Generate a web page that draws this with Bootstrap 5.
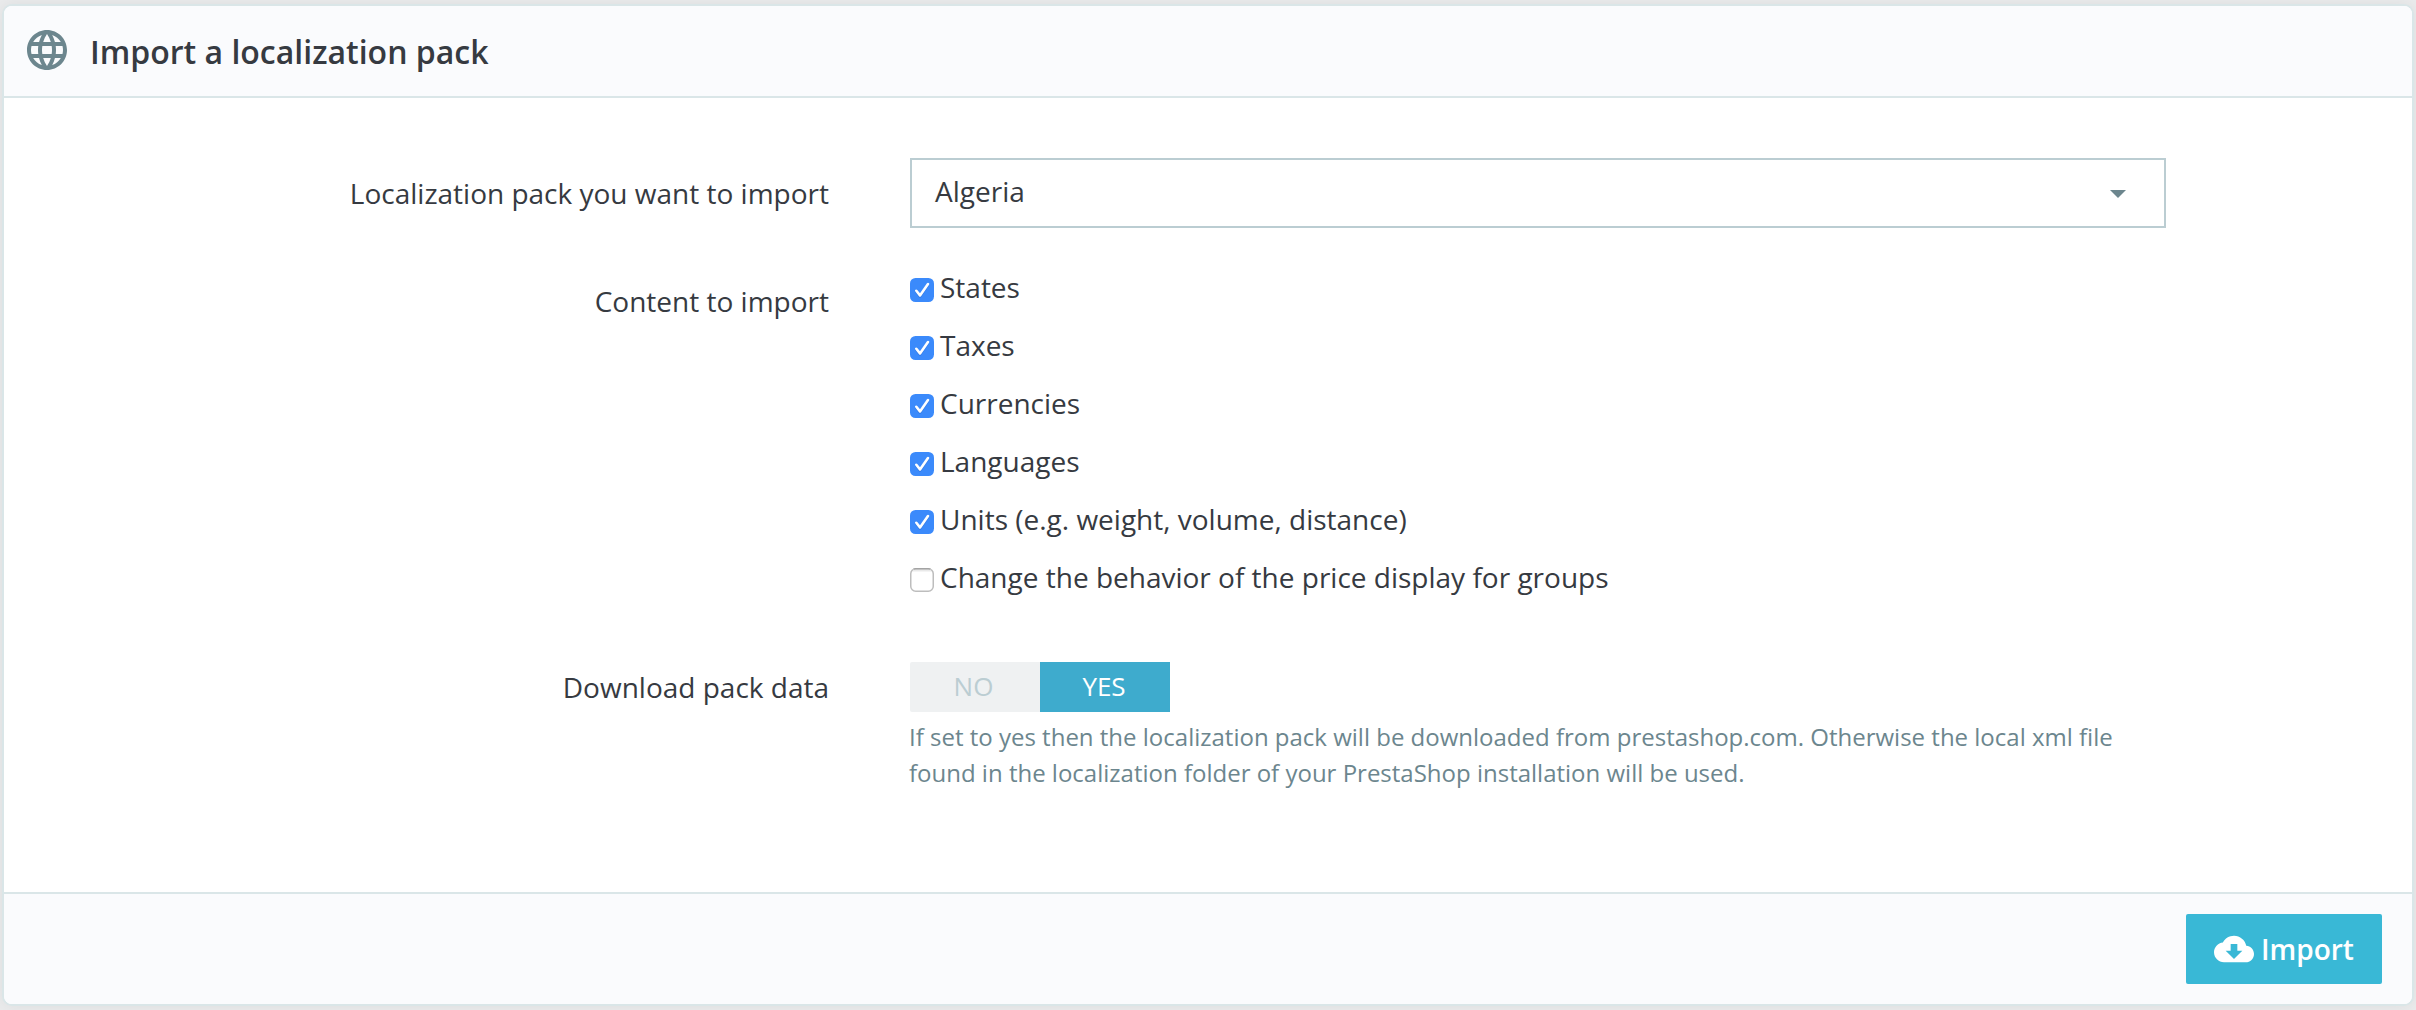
<!DOCTYPE html>
<html lang="en">
<head>
<meta charset="utf-8">
<meta name="viewport" content="width=device-width, initial-scale=1">
<title>Import a localization pack</title>
<link href="https://cdn.jsdelivr.net/npm/bootstrap@5.3.0/dist/css/bootstrap.min.css" rel="stylesheet">
<script src="https://cdn.jsdelivr.net/npm/bootstrap@5.3.0/dist/js/bootstrap.bundle.min.js" defer></script>
<style>
body{font-family:"Open Sans",sans-serif;font-size:28px;line-height:42px;color:#363a41;background:#eaebec;height:1010px;padding:4px 2px;overflow:hidden}
.panel{border:2px solid #dae6e8;border-radius:10px;height:1002px;color:#363a41;box-shadow:0 0 16px rgba(0,0,0,.06)}
.panel .card-header{height:92px;padding:0 19px;background:#fafbfd;border-bottom:2px solid #dae6e8;border-radius:8px 8px 0 0}
.panel .card-footer{height:112px;padding:0 30px;background:#fafbfd;border-top:2px solid #dae6e8;border-radius:0 0 8px 8px}
.panel .card-body{padding:60px 0 0}
.globe{width:48px;height:48px;margin:0 18px 2px 0;fill:#6c868e}
.panel-title{font-size:32px;font-weight:600;line-height:44px;padding:1px 0 0 1px}
.label-col{width:825px;padding-top:14px}
.label-col.label-switch{padding-top:4px}
.field-col{width:1256px;margin-left:81px}
.row-content{margin-top:38px}
.row-download{margin-top:48px}
.pack-select{height:70px;border:2px solid #bbcdd2;padding:0 38px 0 23px}
.pack-select span{padding-bottom:4px}
.pack-select svg{width:16px;height:8px;margin-top:2px;fill:#6c868e}
.choice{height:58px}
.tick{width:24px;height:24px;margin:12px 6px 0 0}
.switch-half{width:130px;height:50px;font-size:26px;line-height:48px}
.switch-off{background:#eff1f2;color:#bbcdd2;padding-right:3px;border-radius:2px 0 0 2px}
.switch-on{background:#3eabcd;color:#fff;padding-right:2px}
.hint{font-size:24px;line-height:36px;color:#6c868e;margin:7px 0 0 -1px;width:1220px}
.import-btn{width:196px;height:70px;--bs-btn-bg:#39b8d6;--bs-btn-color:#fff;--bs-btn-hover-bg:#25b9d7;--bs-btn-hover-color:#fff;font-size:28px;line-height:42px;font-weight:600;border-radius:2px;border:0;padding:0 0 0 28px}
.import-btn svg{width:40px;height:40px;margin:0 7px 1px 0}
</style>
</head>
<body>
<svg class="d-none">
  <symbol id="tick-on" viewBox="0 0 24 24">
    <rect width="24" height="24" rx="5.5" fill="#3b8afb"/>
    <path d="M6.3 13.6 10 18.4 18 6.8" fill="none" stroke="#1f62c9" stroke-opacity=".45" stroke-width="2.6" stroke-linecap="round" stroke-linejoin="round"/>
    <path d="M6.3 12.8 10 17.4 18 6" fill="none" stroke="#fff" stroke-width="2.6" stroke-linecap="round" stroke-linejoin="round"/>
  </symbol>
  <symbol id="tick-off" viewBox="0 0 24 24">
    <rect x=".75" y=".75" width="22.5" height="22.5" rx="5" fill="#fff" stroke="#bdbdbd" stroke-width="1.5"/>
    <path d="M3 2.5H21" stroke="#e9e9e9" stroke-width="2"/>
    <path d="M3.5 1.1Q4.500 .7 5.700 .7H18.300Q19.500 .7 20.500 1.100" fill="none" stroke="#a3a3a3" stroke-width="1.4"/>
  </symbol>
</svg>
<div class="card panel">
  <div class="card-header d-flex align-items-center">
    <svg class="globe" viewBox="0 0 24 24"><path d="M11.990 2C6.470 2 2 6.480 2 12s4.470 10 9.990 10C17.520 22 22 17.520 22 12S17.520 2 11.990 2zm6.930 6h-2.950c-.32-1.250-.78-2.450-1.380-3.560 1.840.63 3.370 1.910 4.330 3.560zM12 4.040c.83 1.200 1.480 2.530 1.910 3.960h-3.820c.43-1.430 1.080-2.760 1.910-3.960zM4.260 14C4.100 13.360 4 12.690 4 12s.1-1.360.26-2h3.380c-.08.66-.14 1.320-.14 2s.06 1.340.14 2H4.260zm.82 2h2.950c.32 1.250.78 2.450 1.380 3.560-1.840-.63-3.370-1.900-4.330-3.560zm2.950-8H5.080c.96-1.660 2.490-2.930 4.330-3.560C8.810 5.550 8.350 6.750 8.030 8zM12 19.960c-.83-1.200-1.480-2.530-1.910-3.960h3.820c-.43 1.430-1.080 2.760-1.910 3.960zM14.340 14H9.660c-.09-.66-.16-1.320-.16-2s.07-1.350.16-2h4.680c.09.65.16 1.320.16 2s-.07 1.340-.16 2zm.25 5.560c.6-1.110 1.060-2.310 1.380-3.560h2.950c-.96 1.650-2.490 2.930-4.330 3.560zM16.360 14c.08-.66.14-1.320.14-2s-.06-1.340-.14-2h3.380c.16.64.26 1.310.26 2s-.1 1.360-.26 2h-3.380z"/></svg>
    <h3 class="panel-title mb-0">Import a localization pack</h3>
  </div>
  <div class="card-body">
    <div class="d-flex">
      <div class="label-col text-end">Localization pack you want to import</div>
      <div class="field-col">
        <div class="pack-select d-flex align-items-center justify-content-between">
          <span>Algeria</span>
          <svg viewBox="0 0 16 8"><path d="M0 0H16L8 8z"/></svg>
        </div>
      </div>
    </div>
    <div class="d-flex row-content">
      <div class="label-col text-end">Content to import</div>
      <div class="field-col">
        <div class="choice d-flex align-items-start"><svg class="tick"><use href="#tick-on"/></svg><span>States</span></div>
        <div class="choice d-flex align-items-start"><svg class="tick"><use href="#tick-on"/></svg><span>Taxes</span></div>
        <div class="choice d-flex align-items-start"><svg class="tick"><use href="#tick-on"/></svg><span>Currencies</span></div>
        <div class="choice d-flex align-items-start"><svg class="tick"><use href="#tick-on"/></svg><span>Languages</span></div>
        <div class="choice d-flex align-items-start"><svg class="tick"><use href="#tick-on"/></svg><span>Units (e.g. weight, volume, distance)</span></div>
        <div class="choice d-flex align-items-start"><svg class="tick"><use href="#tick-off"/></svg><span>Change the behavior of the price display for groups</span></div>
      </div>
    </div>
    <div class="d-flex row-download">
      <div class="label-col label-switch text-end">Download pack data</div>
      <div class="field-col">
        <div class="d-flex text-center">
          <div class="switch-half switch-off">NO</div>
          <div class="switch-half switch-on">YES</div>
        </div>
        <div class="hint">If set to yes then the localization pack will be downloaded from prestashop.com. Otherwise the local xml file found in the localization folder of your PrestaShop installation will be used.</div>
      </div>
    </div>
  </div>
  <div class="card-footer d-flex align-items-center justify-content-end">
    <button type="button" class="btn import-btn d-flex align-items-center">
      <svg viewBox="0 0 24 24" fill="#fff"><path d="M19.350 10.040C18.670 6.590 15.640 4 12 4 9.110 4 6.600 5.640 5.350 8.040 2.340 8.360 0 10.910 0 14c0 3.310 2.690 6 6 6h13c2.760 0 5-2.240 5-5 0-2.640-2.050-4.780-4.650-4.960zM17 13l-5 5-5-5h3V9h4v4h3z"/></svg>
      <span>Import</span>
    </button>
  </div>
</div>
</body>
</html>
